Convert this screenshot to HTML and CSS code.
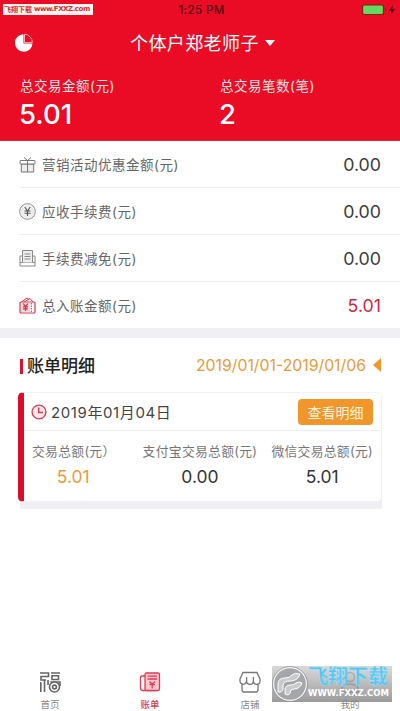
FILE: index.html
```html
<!DOCTYPE html>
<html lang="zh-CN">
<head>
<meta charset="utf-8">
<meta name="viewport" content="width=device-width, initial-scale=1">
<title>账单</title>
<link rel="stylesheet" href="styles.css">
</head>
<body>
<div class="app">
  <header class="header">
    <div class="status">
      <span class="time">1:25 PM</span>
      <svg class="battery" width="36" height="12" viewBox="0 0 36 12">
        <rect x=".5" y="1" width="21" height="9.500" rx="2" fill="#64d860" stroke="#7d2416" stroke-width="1.200"/>
        <path d="M23 4v3.500q1-.5 1-1.750T23 4z" fill="#7d2416"/>
        <path d="M31 1l-4 5.500h2.500L28.500 11 33 5h-2.700z" fill="#4b0714"/>
      </svg>
    </div>
    <div class="site-tag"><span class="tag-cn">飞翔下载</span><span class="tag-url">www.FXXZ.com</span></div>
    <div class="nav">
      <svg class="pie" width="20" height="20" viewBox="0 0 20 20">
        <path d="M9.500 1.200A8.800 8.800 0 1 0 18.500 10.500H9.500z" fill="#fff"/>
        <path d="M10.500 1.200V9.500h7.800A8.300 8.300 0 0 0 10.500 1.200z" fill="none" stroke="#ffc0c8" stroke-width=".9"/>
      </svg>
      <h1 class="shop">个体户郑老师子</h1>
      <i class="caret"></i>
    </div>
    <div class="totals">
      <div class="total"><span class="total-label">总交易金额(元)</span><span class="total-value">5.01</span></div>
      <div class="total"><span class="total-label">总交易笔数(笔)</span><span class="total-value">2</span></div>
    </div>
  </header>

  <ul class="summary">
    <li class="row">
      <svg class="row-icon" viewBox="0 0 17 17" fill="none" stroke="#777" stroke-width="1">
        <path d="M2.300 8v8h12.400V8z" fill="#eee"/><rect x="1" y="4.500" width="15" height="3.500" rx=".5" fill="#fff"/><path d="M8.500 4.500V16M8.500 4.500L5 1.500M8.500 4.500L12 1.500"/>
      </svg>
      <span class="row-label">营销活动优惠金额(元)</span><span class="row-value">0.00</span>
    </li>
    <li class="row">
      <svg class="row-icon" viewBox="0 0 17 17" fill="none" stroke="#888" stroke-width="1">
        <circle cx="8.500" cy="8.500" r="7.800"/><circle cx="8.500" cy="8.500" r="6" fill="#eee" stroke="#ddd" stroke-width=".5"/><path d="M5.800 4l2.700 4 2.700-4M5.500 8h6M5.500 10.200h6M8.500 8v5" stroke="#555" stroke-width="1.100"/>
      </svg>
      <span class="row-label">应收手续费(元)</span><span class="row-value">0.00</span>
    </li>
    <li class="row">
      <svg class="row-icon" viewBox="0 0 17 17" fill="none" stroke="#888" stroke-width="1">
        <path d="M3.500 6H1v10h15V6h-2.500M1 12.500h15"/><path d="M3.500 12.500v-12h10v12" fill="#eee"/><path d="M5.500 4h6M5.500 6.500h6M5.500 9h6"/>
      </svg>
      <span class="row-label">手续费减免(元)</span><span class="row-value">0.00</span>
    </li>
    <li class="row">
      <svg class="row-icon" viewBox="0 0 17 17" fill="none" stroke="#d9364c" stroke-width="1">
        <path d="M2.500 5L8 1l2 1.500M5 5l6-3.500 3 3.500"/><rect x="1" y="5" width="15" height="11" rx="1" stroke-width="1.200"/><rect x="2" y="6" width="9" height="9" fill="#fbd9de" stroke="none"/><path d="M4.200 6.500l2.300 3.200 2.300-3.200M4 9.800h5M4 11.800h5M6.500 9.800v4.200" stroke-width="1.200"/><path d="M12.300 6v10" stroke-dasharray="1.500 1"/>
      </svg>
      <span class="row-label">总入账金额(元)</span><span class="row-value red">5.01</span>
    </li>
  </ul>

  <section class="details">
    <div class="details-head">
      <h2 class="details-title">账单明细</h2>
      <span class="range">2019/01/01-2019/01/06</span>
      <i class="arrow"></i>
    </div>
    <div class="card-wrap">
      <article class="card">
        <div class="card-head">
          <svg class="clock" width="16" height="16" viewBox="0 0 16 16">
            <circle cx="8" cy="8" r="6.900" fill="#fde8eb" stroke="#dc3a50" stroke-width="1.400"/><path d="M7.700 3.500v5h4.300" fill="none" stroke="#dc3a50" stroke-width="1.500"/>
          </svg>
          <span class="date">2019年01月04日</span>
          <button class="view">查看明细</button>
        </div>
        <div class="stats">
          <div class="stat"><span class="stat-label">交易总额(元）</span><span class="stat-value orange">5.01</span></div>
          <div class="stat"><span class="stat-label">支付宝交易总额(元)</span><span class="stat-value">0.00</span></div>
          <div class="stat"><span class="stat-label">微信交易总额(元)</span><span class="stat-value">5.01</span></div>
        </div>
      </article>
    </div>
  </section>

  <nav class="tabs">
    <a class="tab">
      <svg width="22" height="22" viewBox="0 0 22 22" fill="none" stroke="#666" stroke-width="1.600">
        <path d="M1 2h8.500v3.500H2V9h5M1.800 11v10M5.500 9v12M9 9v5M12 2h9M13 4.800h6.500v3.700H13zM21 15v-4h-9.500"/><circle cx="15.500" cy="16" r="5" fill="#fff"/><circle cx="15.500" cy="16" r="1.900"/>
      </svg>
      <span class="tab-label">首页</span>
    </a>
    <a class="tab active">
      <svg width="22" height="22" viewBox="0 0 22 22" fill="none" stroke="#de3b52" stroke-width="1.300">
        <path d="M6 5H3Q1.500 5 1.500 7v10q0 2.500 2.500 2.500h14"/><rect x="6" y="2" width="14.500" height="17.500" rx="1.500" fill="#fbc7cf"/><path d="M8.500 5.200h9.500M8.500 8h9.500M10.500 10.500l2.700 3 2.700-3M10.500 13.700h5.400M13.200 13.500v4"/>
      </svg>
      <span class="tab-label">账单</span>
    </a>
    <a class="tab">
      <svg width="22" height="22" viewBox="0 0 22 22" fill="none" stroke="#777" stroke-width="1.300">
        <path d="M4 1.500h14l3 6.500v2a3.300 3.300 0 0 1-6.600 0 3.400 3.400 0 0 1-6.800 0A3.300 3.300 0 0 1 1 10V8zM7.600 10V6M14.400 10V6M3 13v5.500Q3 21 5 21h12q2 0 2-2.500V13"/>
      </svg>
      <span class="tab-label">店铺</span>
    </a>
    <a class="tab">
      <svg width="22" height="22" viewBox="0 0 22 22" fill="none" stroke="#777" stroke-width="1.300">
        <circle cx="11" cy="6" r="4.500"/><path d="M2 21q0-8 9-8t9 8z"/>
      </svg>
      <span class="tab-label">我的</span>
    </a>
  </nav>

  <div class="watermark">
    <svg class="wm-logo" width="36" height="36" viewBox="0 0 36 36">
      <circle cx="18" cy="18" r="16.500" fill="#a4a6a9" stroke="#f4f4f4" stroke-width="1.500"/>
      <circle cx="18" cy="18" r="17.500" fill="none" stroke="#888" stroke-width=".7"/>
      <path d="M6 26V18q0-6 7-6 5 0 7-3 3-3 8-1-2 7-10 7-6 0-7 4v4q-1 4-5 3z" fill="#c9cacc" stroke="#fff"/>
      <path d="M13 28v-4q0-5 6-5 3 0 5-2 3-2 6 0-2 6-8 6-4 0-4 4-1 3-5 1z" fill="#c9cacc" stroke="#fff"/>
    </svg>
    <div class="wm-text"><span class="wm-cn">飞翔下载</span><span class="wm-url">WWW.FXXZ.COM</span></div>
  </div>
</div>
</body>
</html>
```
FILE: styles.css
```css
* { box-sizing: border-box; }
body, h1, h2, ul { margin: 0; padding: 0; }
body { background: #fff; font-family: Inter, "Noto Sans CJK SC", sans-serif; color: #333; }
.app { position: relative; width: 400px; height: 711px; display: flex; flex-direction: column; overflow: hidden; white-space: nowrap; }

.header { height: 141px; background: #ea0b25; color: #fff; border-bottom: 1px solid #d2293b; }
.status { height: 20px; display: flex; align-items: center; justify-content: center; position: relative; }
.time { font-size: 11.500px; font-weight: 500; color: #4b0714; letter-spacing: .4px; padding-left: 3px; }
.battery { position: absolute; left: 362px; top: 4px; }
.site-tag { position: absolute; left: 3px; top: 4px; width: 90px; height: 11px; background: #fff3f0; color: #d62b31; display: flex; align-items: center; gap: 2px; padding-left: 1px; line-height: 11px; font-weight: 700; }
.tag-cn { font-size: 7px; }
.tag-url { font-family: "DejaVu Sans", sans-serif; font-size: 7px; letter-spacing: -.45px; }
.nav { height: 46px; display: flex; align-items: center; padding-left: 14px; }
.pie { flex: none; }
.shop { font-size: 18px; font-weight: 400; line-height: 28px; margin: 2px 0 0 96px; letter-spacing: .4px; }
.caret { border: 5.500px solid transparent; border-top: 6px solid #fff; border-bottom: 0; margin-left: 6px; }
.totals { display: grid; grid-template-columns: 200px 200px; padding-top: 10px; }
.total { padding-left: 20px; display: flex; flex-direction: column; }
.total-label { font-size: 13.500px; line-height: 20px; color: #ffe0e2; letter-spacing: .5px; }
.total-value { font-size: 27.500px; line-height: 36px; font-weight: 500; margin-left: -1px; }

.summary { list-style: none; border-bottom: 10px solid #efeff4; }
.row { height: 47px; margin-left: 20px; padding-right: 19px; display: flex; align-items: center; border-bottom: 1px solid #eee; }
.row:last-child { height: 46px; border-bottom: 0; }
.row-icon { width: 17px; height: 17px; margin-left: -1px; }
.row-label { font-size: 13.500px; color: #666; margin-left: 6px; letter-spacing: .5px; }
.row-value { margin-left: auto; font-size: 17.800px; color: #3c3c3c; }
.row-value.red { color: #d0273f; }

.details { padding: 0 18px; }
.details-head { height: 54px; display: flex; align-items: center; }
.details-title { font-size: 17px; line-height: 24px; font-weight: 500; color: #222; display: flex; align-items: center; padding-top: 2px; }
.details-title::before { content: ""; width: 3px; height: 15px; background: #dc1030; margin: 0 4px 0 2px; }
.range { margin-left: auto; color: #ea9a3a; font-size: 15.800px; }
.arrow { border: 7px solid transparent; border-right: 8px solid #f0962a; border-left: 0; margin: 0 1px 0 7px; }
.card-wrap { height: 117px; background: linear-gradient(#efeff4, #efeff4) 2px 100% / 362px 30px no-repeat; }
.card { height: 110px; background: #fff; border: 1px solid #f2f2f4; border-left: 6px solid #dc0d2b; border-radius: 5px; }
.card-head { height: 38px; display: flex; align-items: center; padding: 0 8px 0 7px; border-bottom: 1px solid #eee; }
.date { margin-left: 4px; font-size: 15px; letter-spacing: .6px; color: #444; }
.view { margin-left: auto; width: 75px; height: 26px; border: 0; border-radius: 4px; padding: 0; background: #f0962a; color: #fff1dc; font: 14px/26px "Noto Sans CJK SC", sans-serif; }
.stats { display: flex; justify-content: space-between; padding: 11px 8px 0 8px; }
.stat { display: flex; flex-direction: column; align-items: center; }
.stat-label { font-size: 12.800px; line-height: 20px; color: #777; letter-spacing: .3px; }
.stat:first-child .stat-label { margin-right: -5px; }
.stat:first-child .stat-value { padding-left: 4px; }
.stat:nth-child(2) { margin-left: 18px; }
.stat-value { font-size: 17.500px; line-height: 30px; color: #333; }
.stat-value.orange { color: #ea9a3a; }

.tabs { margin-top: auto; height: 40px; display: grid; grid-template-columns: repeat(4, 1fr); }
.tab { display: flex; flex-direction: column; align-items: center; color: #888; }
.tab svg { flex: none; }
.tab-label { font-size: 9.500px; line-height: 12px; margin-top: 6px; }
.active { color: #de3b52; font-weight: 500; }

.watermark { position: absolute; left: 272px; top: 666px; width: 120px; height: 36px; display: flex; background: linear-gradient(rgba(205,205,205,.75), rgba(130,130,130,.8)); }
.wm-text { display: flex; flex-direction: column; }
.wm-cn { font-size: 20px; line-height: 23px; font-weight: 700; color: #58c5ef; -webkit-text-stroke: .3px #b7e8fb; }
.wm-url { font-family: "DejaVu Sans", sans-serif; font-size: 8.500px; line-height: 9px; font-weight: 700; color: #fff; }
```
